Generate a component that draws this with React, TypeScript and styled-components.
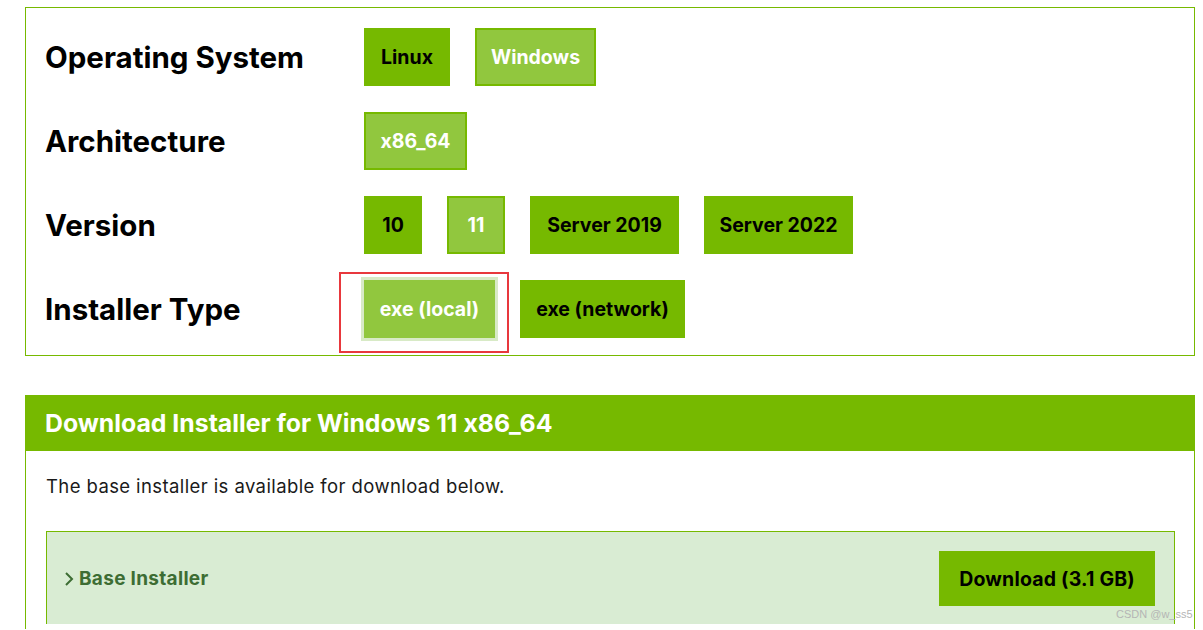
import React from "react";
import styled, { createGlobalStyle, css } from "styled-components";

const GlobalStyle = createGlobalStyle`
  html, body {
    margin: 0;
    padding: 0;
    background: #fff;
    font-family: Inter, Roboto, "Liberation Sans", Arial, sans-serif;
    font-feature-settings: "calt" 0;
  }
  button {
    font-feature-settings: "calt" 0;
  }
`;

const Page = styled.div`
  padding: 7px 8px 0 25px;
  width: 1170px;
`;

const SelectorPanel = styled.div`
  border: 1px solid #76b900;
  padding: 20px 19px 17px 19px;
  display: flex;
  flex-direction: column;
  gap: 26px;
`;

const Row = styled.div`
  display: flex;
  align-items: center;
`;

const Label = styled.div`
  width: 319px;
  flex-shrink: 0;
  font-size: 29.5px;
  font-weight: 700;
  color: #000;
`;

const Options = styled.div`
  display: flex;
  gap: 25px;
`;

const OptionWrap = styled.div<{ $marked?: boolean }>`
  position: relative;
  ${(p) =>
    p.$marked &&
    css`
      &::after {
        content: "";
        position: absolute;
        top: -8px;
        left: -25px;
        right: -14px;
        bottom: -15px;
        border: 2px solid #e8383d;
        pointer-events: none;
      }
    `}
`;

const OptionButton = styled.button<{ $w: number; $active?: boolean; $focus?: boolean }>`
  box-sizing: border-box;
  width: ${(p) => p.$w}px;
  height: 58px;
  padding: 0;
  border: 2px solid #76b900;
  background: #76b900;
  color: #000;
  font-family: inherit;
  font-size: 19.5px;
  font-weight: 700;
  cursor: pointer;
  ${(p) =>
    p.$active &&
    css`
      background: #91c73e;
      color: #fff;
    `}
  ${(p) =>
    p.$focus &&
    css`
      border-color: #91c73e;
      box-shadow: 0 0 0 3px #d8eac6;
    `}
`;

const DownloadSection = styled.section`
  margin-top: 39px;
`;

const SectionHeader = styled.div`
  height: 56px;
  background: #76b900;
  color: #fff;
  display: flex;
  align-items: center;
  padding-left: 20px;
  font-size: 24.8px;
  font-weight: 700;
`;

const SectionBody = styled.div`
  border-left: 1px solid #76b900;
  border-right: 1px solid #76b900;
  padding: 23px 19px 5px 20px;
`;

const Intro = styled.p`
  margin: 0 0 33px 0;
  font-size: 18.5px;
  letter-spacing: 0.4px;
  line-height: 24px;
  color: #1a1a1a;
`;

const InstallerBox = styled.div`
  border: 1px solid #76b900;
  border-bottom: none;
  background: #d9ecd3;
  display: flex;
  align-items: center;
  justify-content: space-between;
  padding: 19px 19px 18px 16px;
`;

const InstallerTitle = styled.div`
  display: flex;
  align-items: center;
  gap: 4px;
  color: #3d6d33;
  font-size: 19px;
  letter-spacing: 0.3px;
  font-weight: 700;
`;

const DownloadButton = styled.button`
  width: 216px;
  height: 55px;
  border: none;
  background: #76b900;
  color: #000;
  font-family: inherit;
  font-size: 19.5px;
  letter-spacing: 0.2px;
  font-weight: 700;
  cursor: pointer;
`;

const Watermark = styled.div`
  position: absolute;
  left: 1116px;
  top: 608px;
  font-size: 11px;
  color: #b5b5b5;
  font-family: "Liberation Sans", Arial, sans-serif;
`;

type Opt = { text: string; w: number; active?: boolean; focus?: boolean };

const rows: { label: string; options: Opt[] }[] = [
  {
    label: "Operating System",
    options: [
      { text: "Linux", w: 86 },
      { text: "Windows", w: 121, active: true },
    ],
  },
  { label: "Architecture", options: [{ text: "x86_64", w: 103, active: true }] },
  {
    label: "Version",
    options: [
      { text: "10", w: 58 },
      { text: "11", w: 58, active: true },
      { text: "Server 2019", w: 149 },
      { text: "Server 2022", w: 149 },
    ],
  },
  {
    label: "Installer Type",
    options: [
      { text: "exe (local)", w: 131, active: true, focus: true },
      { text: "exe (network)", w: 165 },
    ],
  },
];

function Chevron() {
  return (
    <svg width="12" height="16" viewBox="0 0 12 16" fill="none">
      <polyline points="3,2 9,8 3,14" stroke="#3d6d33" strokeWidth="2" />
    </svg>
  );
}

export default function App() {
  return (
    <Page>
      <GlobalStyle />
      <SelectorPanel>
        {rows.map((r) => (
          <Row key={r.label}>
            <Label>{r.label}</Label>
            <Options>
              {r.options.map((o) => (
                <OptionWrap key={o.text} $marked={o.focus}>
                  <OptionButton $w={o.w} $active={o.active} $focus={o.focus}>
                    {o.text}
                  </OptionButton>
                </OptionWrap>
              ))}
            </Options>
          </Row>
        ))}
      </SelectorPanel>
      <DownloadSection>
        <SectionHeader>Download Installer for Windows 11 x86_64</SectionHeader>
        <SectionBody>
          <Intro>The base installer is available for download below.</Intro>
          <InstallerBox>
            <InstallerTitle>
              <Chevron />
              Base Installer
            </InstallerTitle>
            <DownloadButton>Download (3.1 GB)</DownloadButton>
          </InstallerBox>
        </SectionBody>
      </DownloadSection>
      <Watermark>CSDN @w_ss5</Watermark>
    </Page>
  );
}
